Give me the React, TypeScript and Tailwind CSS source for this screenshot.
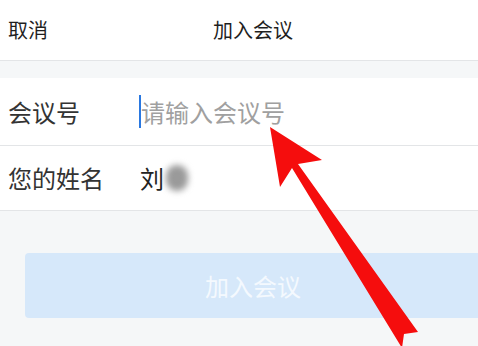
export default function App() {
	const font = { fontFamily: '"Noto Sans CJK SC", "Noto Sans", sans-serif' };

	return (
		<div className="relative w-[478px] h-[346px] overflow-hidden bg-[#f5f7f8]" style={font}>
			<div className="w-[506px]">
				{/* header */}
				<header className="relative flex h-[61px] items-center border-b border-[#e3e5e7] bg-white">
					<button className="pl-2 text-[20px] text-[#1f1f1f]">取消</button>
					<h1 className="absolute left-0 right-0 text-center text-[20px] text-[#1f1f1f] pointer-events-none">
						加入会议
					</h1>
				</header>

				<div className="h-[17px]" />

				<form className="bg-white" onSubmit={e => e.preventDefault()}>
					<div className="flex h-[68px] items-center border-b border-[#e3e5e7]">
						<label className="w-[139px] pl-2 text-[24px] text-[#333]">会议号</label>
						<div className="flex items-center">
							<span className="h-[33px] w-[2px] bg-[#2a78e0]" />
							<span className="text-[24px] text-[#a0a0a0]">请输入会议号</span>
						</div>
					</div>
					<div className="flex h-[65px] items-center border-b border-[#e3e5e7]">
						<label className="w-[140px] pl-2 text-[24px] text-[#333]">您的姓名</label>
						<div className="flex items-center">
							<span className="text-[24px] text-[#222]">刘</span>
							<span className="ml-[2px] h-[26px] w-[22px] rounded-full bg-[#9a9a9a] blur-[3px]" />
						</div>
					</div>
				</form>

				<div className="pl-[25px] pt-[42px]">
					<button className="flex h-[65px] w-[456px] items-center justify-center rounded-[4px] bg-[#d6e8fa] text-[24px] text-[#f4f9fe]">
						加入会议
					</button>
				</div>
			</div>

			{/* red annotation arrow */}
			<svg className="absolute left-0 top-0 pointer-events-none" width="478" height="346" viewBox="0 0 478 346">
				<polygon
					points="270,127 322,160 298,164 418,332 404,334 402,348 292,168 280,187"
					fill="#f50d0d"
				/>
			</svg>
		</div>
	);
}
